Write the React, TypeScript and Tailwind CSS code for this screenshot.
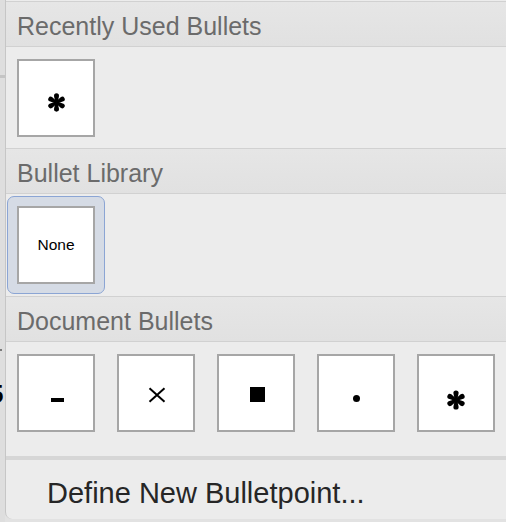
import type { ReactNode } from 'react'

const font = { fontFamily: '"Liberation Sans", Arial, sans-serif' }

function Asterisk({ size = 20 }: { size?: number }) {
  const arm = 'M -1.1 0 L -2.4 -6.3 A 2.4 2.4 0 0 1 2.4 -6.3 L 1.1 0 Z'
  return <svg width={size} height={size} viewBox="-10 -10 20 20">
    {[0, 60, 120, 180, 240, 300].map(a => <path key={a} d={arm} transform={`rotate(${a})`} fill="#000" />)}
  </svg>
}

function Cross() {
  return <svg width="18" height="16" viewBox="0 0 18 16">
    <path d="M1.5 1.2 L16.5 14.8 M16.5 1.2 L1.5 14.8" stroke="#000" strokeWidth="2" fill="none" />
  </svg>
}

function Swatch({ children, className = '' }: { children: ReactNode, className?: string }) {
  return <div className={`flex h-[78px] w-[78px] shrink-0 items-center justify-center border-2 border-[#a6a6a6] bg-white ${className}`}>
    {children}
  </div>
}

function Header({ title }: { title: string }) {
  return <div className="h-[46px] shrink-0 border-y border-[#d1d1d1] bg-gradient-to-b from-[#e6e6e6] to-[#e1e1e1] pl-[11px] pt-[9px] text-[25px] leading-[30px] text-[#6b6b6b]">
    {title}
  </div>
}

export default function App() {
  return <div className="flex h-[522px] w-[506px] overflow-hidden bg-[#e2e2e2]" style={font}>
    <div className="flex w-[5px] shrink-0 flex-col overflow-hidden bg-[#dedede]">
      <div className="mt-[75px] h-[3px] bg-[#c4c4c4]" />
      <div className="mt-[271px] h-[2px] w-[2px] bg-[#7a7a7a]" />
      <div className="-ml-[11px] mt-[30px] text-[26px] font-bold leading-none text-black">5</div>
    </div>

    <div className="flex h-[519px] flex-1 flex-col overflow-hidden rounded-bl-[7px] border-l border-[#c6c6c6] bg-[#ececec] pt-[1px]">
      <Header title="Recently Used Bullets" />
      <div className="h-[101px] shrink-0 pl-[11px] pt-[12px]">
        <Swatch className="pt-[9px]"><Asterisk size={21} /></Swatch>
      </div>

      <Header title="Bullet Library" />
      <div className="h-[102px] shrink-0 pl-[1px] pt-[2px]">
        <div className="w-[98px] rounded-[7px] border border-[#8ba5d4] bg-[#d5dbe5] p-[9px]">
          <Swatch><span className="text-[15.5px] text-black">None</span></Swatch>
        </div>
      </div>

      <Header title="Document Bullets" />
      <div className="flex h-[114px] shrink-0 gap-[22px] pl-[11px] pt-[12px]">
        <Swatch className="pl-[2px] pt-[14px]"><div className="h-[4px] w-[13px] bg-black" /></Swatch>
        <Swatch className="pt-[3px] pl-[1px]"><Cross /></Swatch>
        <Swatch className="pl-[3px] pt-[3px]"><div className="h-[15px] w-[15px] bg-black" /></Swatch>
        <Swatch className="pt-[11px]"><div className="h-[7px] w-[7px] rounded-full bg-black" /></Swatch>
        <Swatch className="pt-[13px]"><Asterisk size={22} /></Swatch>
      </div>

      <div className="h-[4px] shrink-0 bg-[#d6d6d6]" />
      <div className="flex-1 pl-[41px] pt-[17px] text-[29px] leading-[33px] text-[#262626]">
        Define New Bulletpoint...
      </div>
    </div>
  </div>
}
